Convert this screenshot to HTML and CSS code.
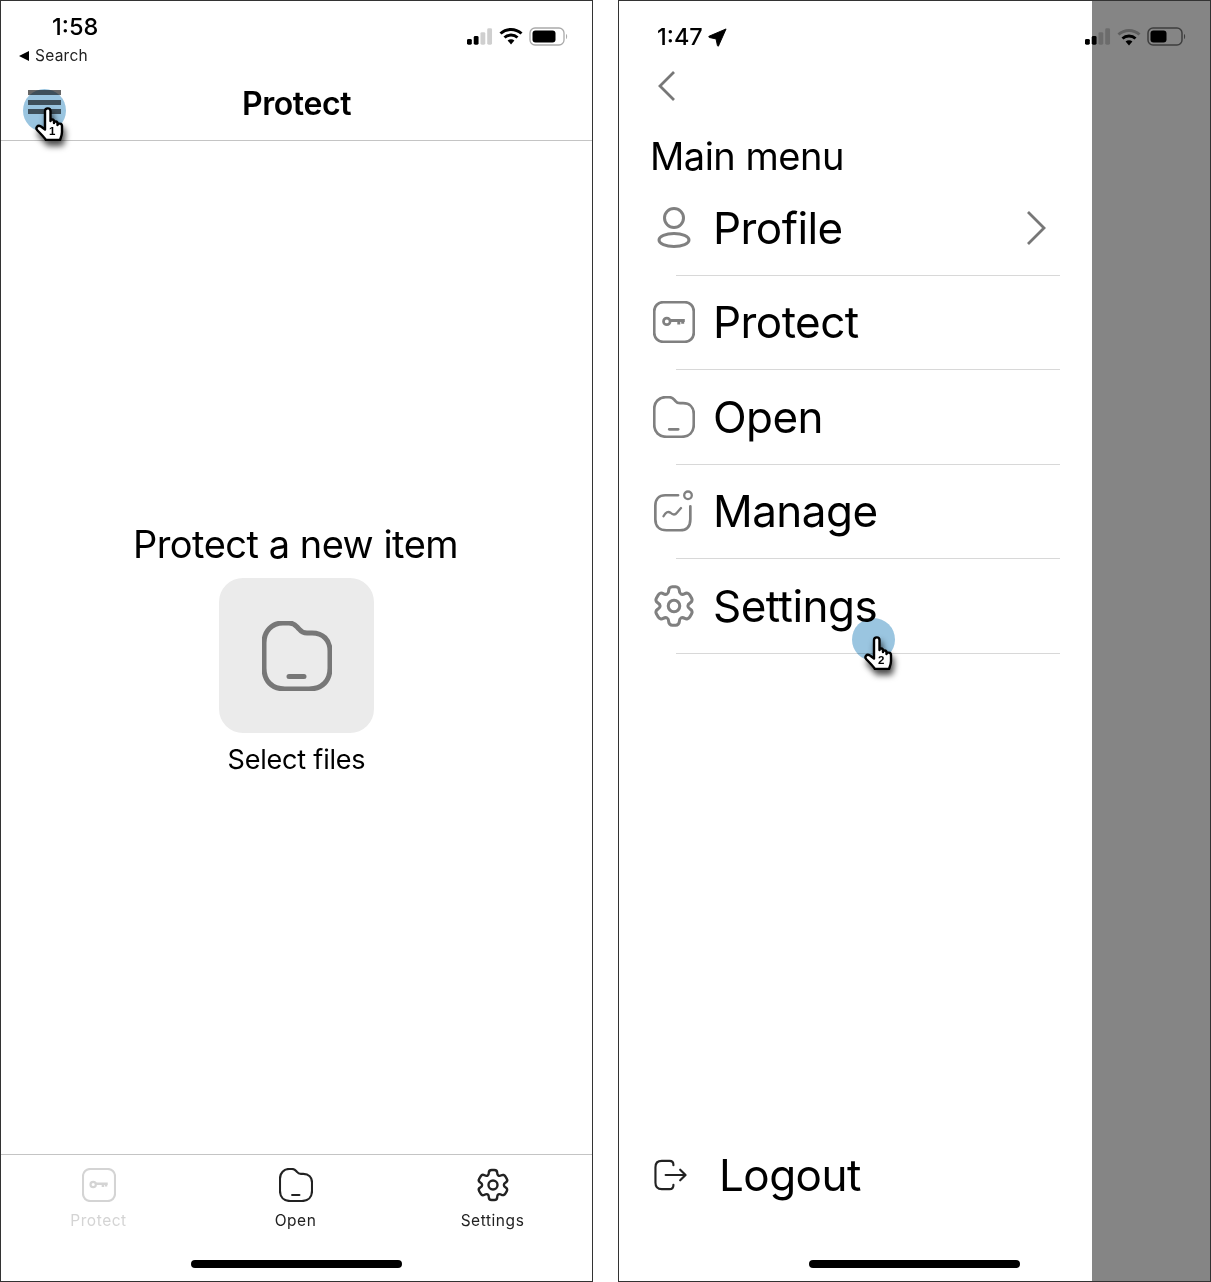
FILE: index.html
```html
<!DOCTYPE html>
<html lang="en">
<head>
    <meta charset="UTF-8">
    <title>Protect and main menu</title>
    <link rel="stylesheet" href="styles.css">
</head>
<body>
    <svg class="defs" width="0" height="0">
        <symbol id="i-signal" viewBox="0 0 27 17">
            <rect x="0" y="11" width="5" height="6" rx="1.5" fill="#000"/>
            <rect x="7" y="8" width="5" height="9" rx="1.5" fill="#000"/>
            <rect x="14" y="4" width="5" height="13" rx="1.5" fill="#cfcfcf"/>
            <rect x="21" y="0" width="5" height="17" rx="1.5" fill="#cfcfcf"/>
        </symbol>
        <symbol id="i-wifi" viewBox="0 0 24 18">
            <path d="M1.500 6.500 C7.500 1 16.500 1 22.500 6.500 M5.500 10.500 C9 7.300 15 7.300 18.500 10.500" fill="none" stroke="#000" stroke-width="3"/>
            <path d="M8.600 13.400 C10.500 11.800 13.500 11.800 15.400 13.400 L12 17.400 Z" fill="#000"/>
        </symbol>
        <symbol id="i-wifi-low" viewBox="0 0 24 18">
            <path d="M1.500 6.500 C7.500 1 16.500 1 22.500 6.500" fill="none" stroke="#b4b4b4" stroke-width="3"/>
            <path d="M5.500 10.500 C9 7.300 15 7.300 18.500 10.500" fill="none" stroke="#000" stroke-width="3"/>
            <path d="M8.600 13.400 C10.500 11.800 13.500 11.800 15.400 13.400 L12 17.400 Z" fill="#000"/>
        </symbol>
        <symbol id="i-battery" viewBox="0 0 39 19">
            <rect x="1" y="1" width="34" height="17" rx="5" fill="none" stroke="#aaa" stroke-width="1.300"/>
            <rect x="3.500" y="3.500" width="23" height="12" rx="3" fill="#000"/>
            <path d="M37 7 C38.500 7.500 38.500 11.500 37 12 Z" fill="#aaa"/>
        </symbol>
        <symbol id="i-battery-half" viewBox="0 0 39 19">
            <rect x="1" y="1" width="34" height="17" rx="5" fill="none" stroke="#777" stroke-width="1.500"/>
            <rect x="3.500" y="3.500" width="16" height="12" rx="3" fill="#000"/>
            <path d="M37 7 C38.500 7.500 38.500 11.500 37 12 Z" fill="#777"/>
        </symbol>
        <symbol id="i-folder" viewBox="0 0 70 70">
            <path d="M2 22 C2 10 10 2 21 2 H27 C33 2 34 5 37 8 C39 10.500 41 12 45 12 H50 C61 12 68 19 68 30 V47 C68 60 60 68 47 68 H23 C10 68 2 60 2 47 Z M27 55.500 H42" fill="none" stroke="currentColor" stroke-linecap="round"/>
        </symbol>
        <symbol id="i-key" viewBox="0 0 70 70">
            <rect x="2" y="2" width="66" height="66" rx="15" fill="none" stroke="currentColor"/>
            <circle cx="23" cy="34" r="5.500" fill="none" stroke="currentColor" stroke-width="4.500"/>
            <path d="M28 32.500 H53 M43 32.500 V39 M49.500 32.500 V38" fill="none" stroke="currentColor" stroke-width="5"/>
        </symbol>
        <symbol id="i-gear" viewBox="0 0 24 24">
            <g transform="rotate(90 12 12)" fill="none" stroke="currentColor" stroke-width="1.600" stroke-linejoin="round">
                <circle cx="12" cy="12" r="3"/>
                <path d="M2 12.880v-1.760c0-1.040.85-1.900 1.900-1.900 1.810 0 2.550-1.280 1.640-2.850-.52-.9-.21-2.070.7-2.590l1.730-.99c.79-.47 1.810-.19 2.280.6l.11.19c.9 1.570 2.380 1.570 3.290 0l.11-.19c.47-.79 1.490-1.070 2.280-.6l1.730.99c.91.52 1.220 1.690.7 2.590-.91 1.570-.17 2.850 1.640 2.850 1.040 0 1.900.85 1.900 1.900v1.760c0 1.040-.85 1.900-1.900 1.900-1.810 0-2.550 1.280-1.640 2.850.52.91.21 2.070-.7 2.590l-1.730.99c-.79.47-1.810.19-2.280-.6l-.11-.19c-.9-1.570-2.380-1.570-3.290 0l-.11.19c-.47.79-1.490 1.070-2.280.6l-1.730-.99a1.900 1.900 0 0 1-.7-2.590c.91-1.570.17-2.850-1.640-2.850-1.050 0-1.900-.86-1.900-1.900Z"/>
            </g>
        </symbol>
        <symbol id="i-person" viewBox="0 0 36 42">
            <circle cx="18" cy="11" r="9.500" fill="none" stroke="currentColor" stroke-width="3"/>
            <ellipse cx="18" cy="33" rx="15" ry="6.500" fill="none" stroke="currentColor" stroke-width="3"/>
        </symbol>
        <symbol id="i-manage" viewBox="0 0 70 72">
            <path d="M42 9 H20 C9 9 3 16 3 27 V50 C3 62 10 69 22 69 H45 C57 69 63 62 63 50 V28" fill="none" stroke="currentColor" stroke-linecap="round"/>
            <circle cx="59" cy="9" r="6.500" fill="none" stroke="currentColor" stroke-width="4"/>
            <path d="M17 45 C21 38 25 36 29 39 C33 43 37 43 40 39 L47 31" fill="none" stroke="currentColor" stroke-width="4" stroke-linecap="round"/>
        </symbol>
        <symbol id="i-logout" viewBox="0 0 34 32">
            <path d="M20 6 V5.500 C20 3 18.500 1.500 16 1.500 H8 C4 1.500 1.500 4 1.500 8 V24 C1.500 28 4 30.500 8 30.500 H16 C18.500 30.500 20 29 20 26.500 V26" fill="none" stroke="currentColor" stroke-width="2.200" stroke-linecap="round"/>
            <path d="M12 16 H32 M27 10.500 L32.500 16 L27 21.500" fill="none" stroke="currentColor" stroke-width="2.200" stroke-linecap="round" stroke-linejoin="round"/>
        </symbol>
        <symbol id="i-hand" viewBox="0 0 30 34">
            <path d="M10 4 C10 0.500 15.500 0.500 15.500 4 V14 C15.500 12 19 12 19 14.500 V16 C19 14 22.500 14 22.500 16.500 V18 C22.500 16 27 16 27 19 V25 C27 28 26 30 25 33 H11 C9 30 6 27 2.500 23.500 C0 21 2.500 17.500 6 19.500 L10 22.500 Z" fill="#fff" stroke="#000" stroke-width="2.400" stroke-linejoin="round"/>
        </symbol>
    </svg>

    <!-- left screen -->
    <div class="phone">
        <div class="status">
            <div class="status-left">
                <div class="clock">1:58</div>
                <div class="back-app"><span class="back-tri"></span>Search</div>
            </div>
            <div class="status-icons">
                <svg class="ic-signal"><use href="#i-signal"/></svg>
                <svg class="ic-wifi"><use href="#i-wifi"/></svg>
                <svg class="ic-battery"><use href="#i-battery"/></svg>
            </div>
        </div>
        <div class="header">
            <div class="burger"><span></span><span></span><span></span></div>
            <div class="header-title">Protect</div>
        </div>
        <div class="main">
            <div class="main-title">Protect a new item</div>
            <div class="select-box"><svg class="ic-select"><use href="#i-folder"/></svg></div>
            <div class="select-label">Select files</div>
        </div>
        <div class="tabs">
            <div class="tab tab-off"><svg class="ic-tab"><use href="#i-key"/></svg><span>Protect</span></div>
            <div class="tab"><svg class="ic-tab"><use href="#i-folder"/></svg><span>Open</span></div>
            <div class="tab"><svg class="ic-tab ic-tab-gear"><use href="#i-gear"/></svg><span>Settings</span></div>
        </div>
        <div class="home-bar"></div>

        <div class="pointer pointer-one">
            <div class="pointer-dot"></div>
            <svg class="pointer-hand"><use href="#i-hand"/></svg>
            <span class="pointer-num">1</span>
        </div>
    </div>

    <!-- right screen -->
    <div class="phone">
        <div class="status status-menu">
            <div class="clock-row">
                <span class="clock">1:47</span>
                <svg class="ic-loc" viewBox="0 0 20 20"><path d="M19 1 L11 19 C10.500 19.500 10 19 9.800 18 L8.500 11.500 L1.500 10 C0.500 9.500 0.500 9 1.500 8.500 Z" fill="#000" stroke="#000" stroke-linejoin="round"/></svg>
            </div>
            <div class="status-icons">
                <svg class="ic-signal"><use href="#i-signal"/></svg>
                <svg class="ic-wifi"><use href="#i-wifi-low"/></svg>
                <svg class="ic-battery"><use href="#i-battery-half"/></svg>
            </div>
        </div>
        <div class="drawer">
            <svg class="ic-back" viewBox="0 0 18 32"><path d="M16 2 L2 16 L16 30" fill="none" stroke="#777" stroke-width="2.800"/></svg>
            <div class="drawer-title">Main menu</div>

            <div class="row">
                <span class="row-icon"><svg class="ic-person"><use href="#i-person"/></svg></span>
                <span class="row-label">Profile</span>
                <svg class="ic-more" viewBox="0 0 20 36"><path d="M2 2 L18 18 L2 34" fill="none" stroke="#777" stroke-width="2.800"/></svg>
            </div>
            <div class="divider"></div>
            <div class="row">
                <span class="row-icon"><svg class="ic-menu"><use href="#i-key"/></svg></span>
                <span class="row-label">Protect</span>
            </div>
            <div class="divider"></div>
            <div class="row">
                <span class="row-icon"><svg class="ic-menu"><use href="#i-folder"/></svg></span>
                <span class="row-label">Open</span>
            </div>
            <div class="divider"></div>
            <div class="row">
                <span class="row-icon"><svg class="ic-menu"><use href="#i-manage"/></svg></span>
                <span class="row-label">Manage</span>
            </div>
            <div class="divider"></div>
            <div class="row">
                <span class="row-icon"><svg class="ic-menu ic-menu-gear"><use href="#i-gear"/></svg></span>
                <span class="row-label">Settings</span>
            </div>
            <div class="divider"></div>

            <div class="logout">
                <svg class="ic-logout"><use href="#i-logout"/></svg>
                <span class="logout-label">Logout</span>
            </div>
        </div>
        <div class="home-bar"></div>

        <div class="scrim"></div>

        <div class="pointer pointer-two">
            <div class="pointer-dot"></div>
            <svg class="pointer-hand"><use href="#i-hand"/></svg>
            <span class="pointer-num">2</span>
        </div>
    </div>
</body>
</html>
```

FILE: styles.css
```css
* {
    box-sizing: border-box;
}
body {
    margin: 0;
    background: white;
    font-family: Inter, "Liberation Sans", sans-serif;
    color: #000;
    display: flex;
    gap: 25px;
    width: 1211px;
    height: 1282px;
    overflow: hidden;
}
.defs {
    position: absolute;
}
svg {
    display: block;
    overflow: visible;
}
.phone {
    position: relative;
    width: 593px;
    height: 1282px;
    border: 1px solid #333;
    background: white;
    display: flex;
    flex-direction: column;
    overflow: hidden;
}

/* status bar */
.status {
    height: 77px;
    display: flex;
    justify-content: space-between;
    padding: 12px 24px 0 18px;
    flex-shrink: 0;
}
.status-left {
    display: flex;
    flex-direction: column;
}
.clock {
    font-size: 23.5px;
    font-weight: 500;
    line-height: 28px;
    padding-left: 33px;
}
.back-app {
    display: flex;
    align-items: center;
    font-size: 15.5px;
    letter-spacing: 0.25px;
    margin-top: 5px;
    color: #222;
    line-height: 20px;
}
.back-tri {
    width: 0;
    height: 0;
    border-top: 5.5px solid transparent;
    border-bottom: 5.5px solid transparent;
    border-right: 10px solid #000;
    margin-right: 6px;
}
.status-icons {
    display: flex;
    align-items: center;
    height: 18px;
    margin-top: 14px;
}
.ic-signal {
    width: 26px;
    height: 17px;
}
.ic-wifi {
    width: 24px;
    height: 18px;
    margin-left: 6px;
}
.ic-battery {
    width: 39px;
    height: 19px;
    margin-left: 6px;
}

/* header */
.header {
    position: relative;
    height: 63px;
    border-bottom: 1px solid #c4c4c4;
    display: flex;
    align-items: center;
    justify-content: center;
    flex-shrink: 0;
}
.header-title {
    font-size: 32px;
    font-weight: 600;
    letter-spacing: -0.4px;
    margin-top: -12px;
}
.burger {
    position: absolute;
    left: 27px;
    top: 12px;
    width: 33px;
}
.burger span {
    display: block;
    height: 5px;
    margin-bottom: 4.5px;
    background: #666;
}

/* main */
.main {
    flex: 1;
    display: flex;
    flex-direction: column;
    align-items: center;
    padding-top: 379px;
}
.main-title {
    font-size: 38px;
    line-height: 48px;
    letter-spacing: -0.5px;
    margin-left: -2px;
}
.select-box {
    width: 155px;
    height: 155px;
    margin-top: 10px;
    border-radius: 24px;
    background: #ebebeb;
    display: flex;
    align-items: center;
    justify-content: center;
    color: #777;
}
.ic-select {
    width: 70px;
    height: 70px;
    stroke-width: 5;
}
.select-label {
    font-size: 27px;
    line-height: 34px;
    margin-top: 10px;
    letter-spacing: -0.2px;
}

/* tabs */
.tabs {
    display: grid;
    grid-template-columns: repeat(3, 1fr);
    height: 96px;
    border-top: 1px solid #c4c4c4;
    flex-shrink: 0;
    padding-top: 13px;
}
.tab {
    display: flex;
    flex-direction: column;
    align-items: center;
    margin-left: -2px;
    color: #222;
    font-size: 15.5px;
    letter-spacing: 0.55px;
}
.tab span {
    margin-top: 9px;
    line-height: 20px;
}
.tab-off {
    color: #d4d4d4;
}
.ic-tab {
    width: 34px;
    height: 34px;
    stroke-width: 4.4;
}
.ic-tab-gear {
    width: 36px;
    height: 36px;
    margin-top: -1px;
    margin-bottom: -1px;
}
.home-bar {
    width: 211px;
    height: 8px;
    border-radius: 4px;
    background: #000;
    margin: 10px auto 13px;
    flex-shrink: 0;
}

/* right screen */
.status-menu {
    height: 64px;
    padding: 0 24px 0 38px;
    align-items: center;
}
.status-menu .status-icons {
    margin-top: 7px;
}
.clock-row {
    display: flex;
    align-items: center;
    margin-top: 8px;
}
.clock-row .clock {
    padding-left: 0;
}
.ic-loc {
    width: 19px;
    height: 19px;
    margin-left: 5px;
}
.drawer {
    flex: 1;
    width: 473px;
    display: flex;
    flex-direction: column;
    padding-left: 32px;
}
.ic-back {
    width: 18px;
    height: 32px;
    margin: 5px 0 0 7px;
}
.drawer-title {
    font-size: 38px;
    line-height: 46px;
    letter-spacing: -0.5px;
    margin: 31px 0 2px -1px;
    flex-shrink: 0;
}
.row {
    height: 93.5px;
    display: flex;
    align-items: center;
    flex-shrink: 0;
    padding-right: 46px;
}
.row-icon {
    width: 62px;
    display: flex;
    color: #808080;
    padding-left: 2px;
}
.row-label {
    flex: 1;
    font-size: 44px;
    letter-spacing: -0.55px;
    line-height: 52px;
}
.ic-menu {
    width: 42px;
    height: 42px;
    stroke-width: 4.6;
}
.ic-menu-gear {
    width: 46px;
    height: 46px;
    margin: -2px -4px -2px -2px;
}
.ic-person {
    width: 36px;
    height: 42px;
    margin-left: 3px;
}
.ic-more {
    width: 20px;
    height: 36px;
}
.divider {
    height: 1px;
    background: #d8d8d8;
    margin: 0 32px 0 25px;
    flex-shrink: 0;
}
.logout {
    margin-top: auto;
    display: flex;
    align-items: center;
    padding: 0 0 49px 3px;
}
.ic-logout {
    width: 33px;
    height: 32px;
    color: #222;
}
.logout-label {
    font-size: 44px;
    line-height: 52px;
    letter-spacing: -0.55px;
    margin-left: 32px;
}
.scrim {
    position: absolute;
    top: 0;
    right: 0;
    bottom: 0;
    width: 118px;
    background: rgba(0, 0, 0, 0.48);
}

/* click pointers */
.pointer {
    position: absolute;
    width: 44px;
    height: 60px;
}
.pointer-one {
    left: 22px;
    top: 88px;
}
.pointer-two {
    left: 233px;
    top: 617px;
}
.pointer-dot {
    width: 43px;
    height: 43px;
    border-radius: 50%;
    background: #9ac5e0;
    mix-blend-mode: multiply;
}
.pointer-hand {
    position: absolute;
    left: 12px;
    top: 18px;
    width: 30px;
    height: 34px;
    filter: drop-shadow(2px 5px 3px rgba(0, 0, 0, 0.7));
}
.pointer-num {
    position: absolute;
    left: 26px;
    top: 35px;
    font-size: 11.5px;
    font-weight: 600;
    line-height: 14px;
    font-family: "Liberation Sans", sans-serif;
}
```
